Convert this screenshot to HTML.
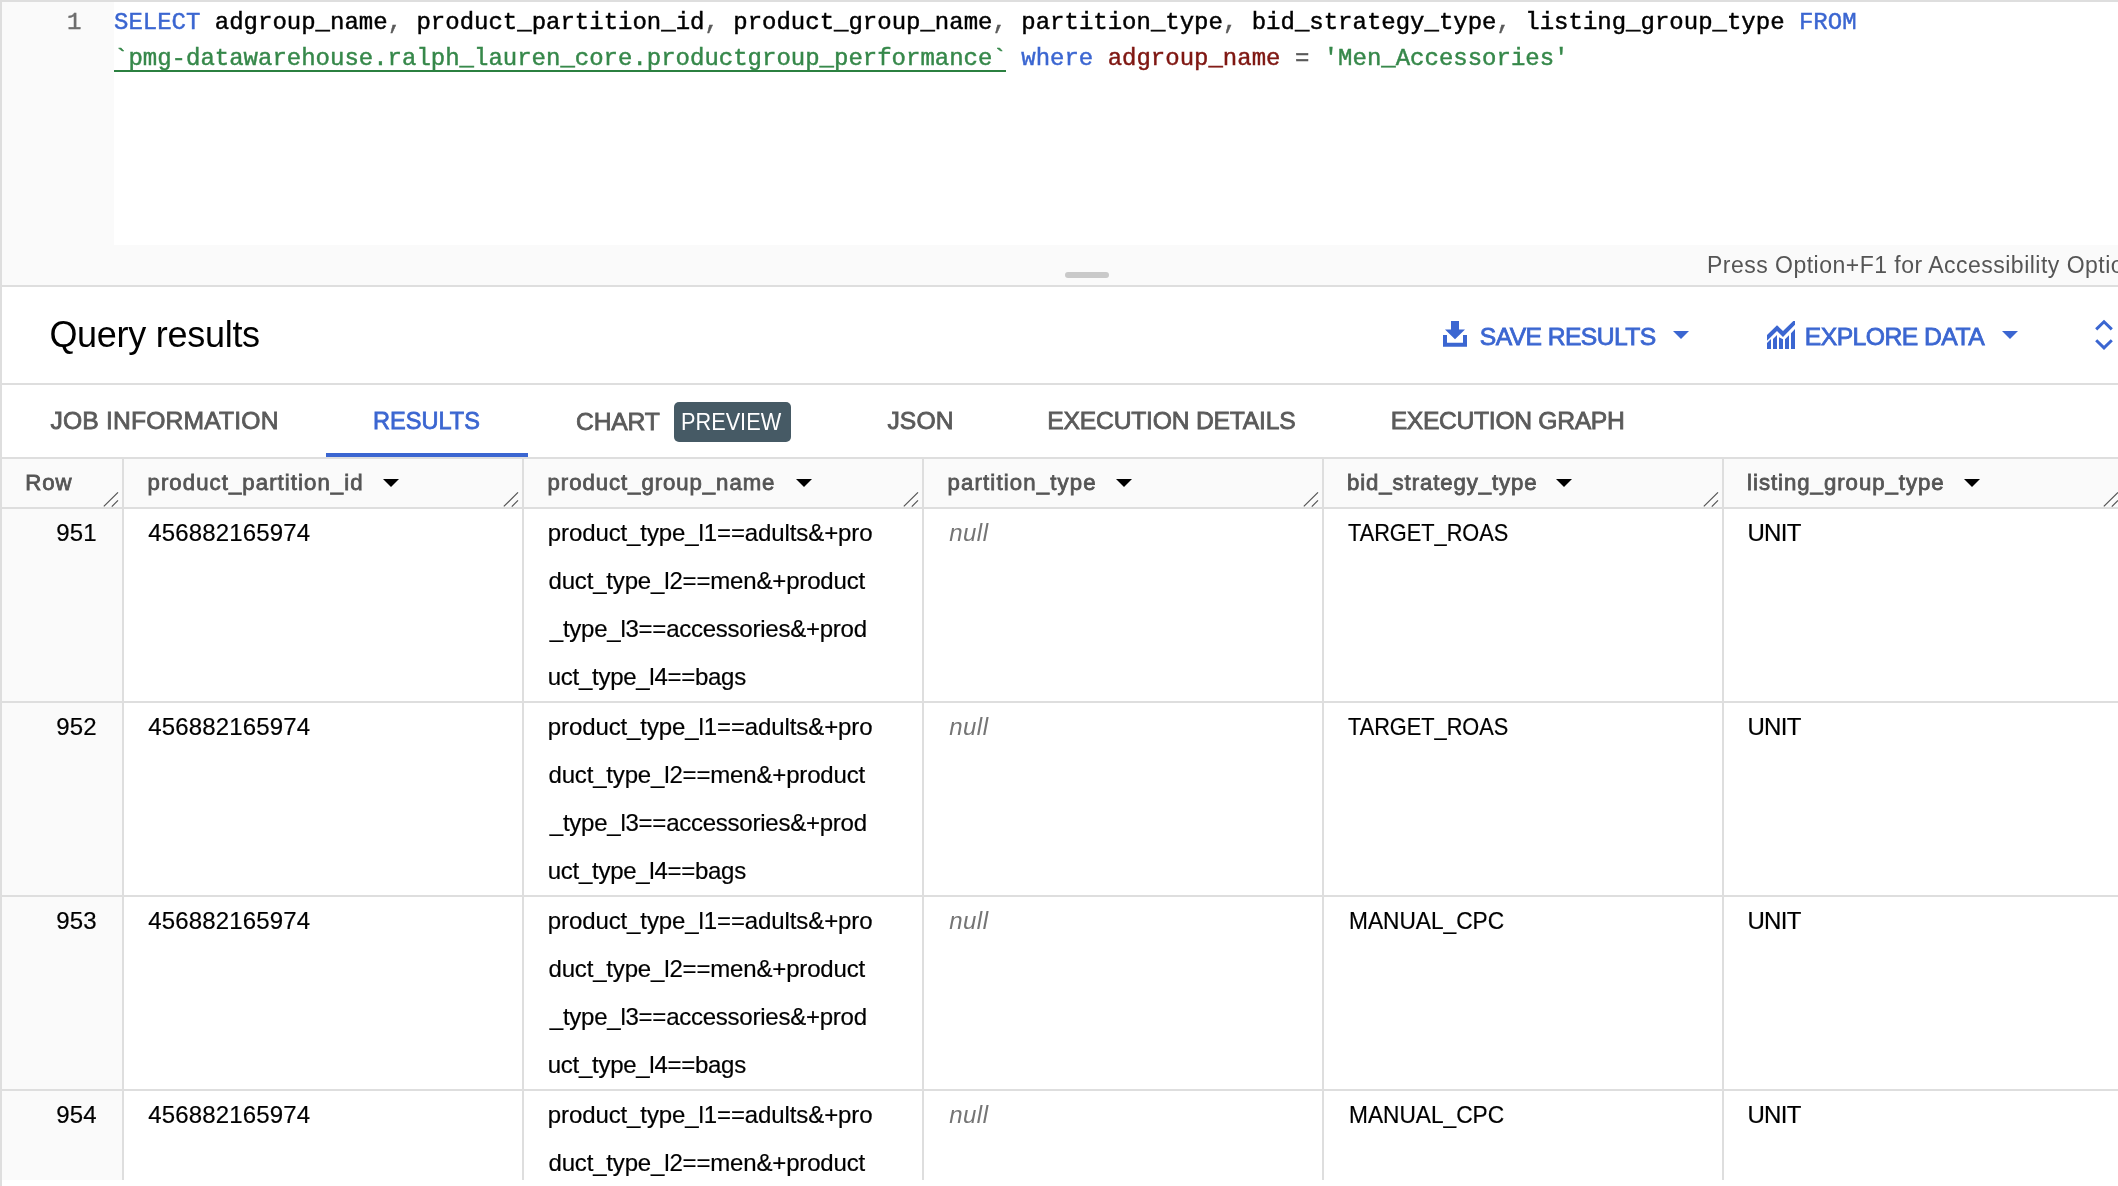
<!DOCTYPE html><html><head><meta charset="utf-8"><title>Query results</title><style>

html,body{margin:0;padding:0;background:#fff;}
body{width:2118px;height:1186px;position:relative;overflow:hidden;font-family:"Liberation Sans", sans-serif;}
.t{position:absolute;white-space:pre;line-height:1;font-family:"Liberation Sans", sans-serif;}
.a{position:absolute;}
.code{position:absolute;left:114px;white-space:pre;font-family:"Liberation Mono", monospace;font-size:24px;letter-spacing:-0.002px;line-height:36px;color:#000;-webkit-text-stroke:0.45px currentColor;}
.hl{position:absolute;left:0;width:2118px;height:2px;background:#dedede;}
.vl{position:absolute;width:2px;background:#dedede;}
svg{position:absolute;overflow:visible;}

</style></head><body>
<div class="a" style="left:0;top:0;width:2118px;height:285px;background:#fafafa"></div>
<div class="a" style="left:114px;top:2px;width:2004px;height:243px;background:#fff"></div>
<div class="hl" style="top:0"></div>
<div class="a" style="left:114px;top:70px;width:892px;height:2px;background:#2b8040"></div>
<div class="a" style="left:1065px;top:272px;width:44px;height:6px;border-radius:3px;background:#c9c9c9"></div>
<div class="hl" style="top:285px"></div>
<div class="hl" style="top:383px"></div>
<div class="a" style="left:326px;top:453px;width:202px;height:4px;background:#3b66d1"></div>
<div class="hl" style="top:457px"></div>
<div class="a" style="left:674px;top:402px;width:117px;height:40px;border-radius:5px;background:#465a65"></div>
<div class="a" style="left:2px;top:459px;width:2116px;height:48px;background:#fafafa"></div>
<div class="a" style="left:2px;top:509px;width:120px;height:671px;background:#fafafa"></div>
<div class="hl" style="top:507px"></div>
<div class="hl" style="top:701px"></div>
<div class="hl" style="top:895px"></div>
<div class="hl" style="top:1089px"></div>
<div class="vl" style="left:122px;top:459px;height:721px"></div>
<div class="vl" style="left:522px;top:459px;height:721px"></div>
<div class="vl" style="left:922px;top:459px;height:721px"></div>
<div class="vl" style="left:1322px;top:459px;height:721px"></div>
<div class="vl" style="left:1722px;top:459px;height:721px"></div>
<div class="vl" style="left:0;top:0;height:1186px"></div>
<svg style="left:1443px;top:321px" width="24" height="26" viewBox="0 0 24 26"><path fill="#3b66d1" d="M8 0H16V8.4H22L12 18.2L2 8.4H8ZM0 14H4V21.8H20V14H24V25.8H0Z"/></svg>
<svg style="left:1673.2px;top:331px" width="16" height="8" viewBox="0 0 16 8"><path d="M0 0H16L8 8Z" fill="#3b66d1"/></svg>
<svg style="left:1767px;top:321px" width="28" height="28" viewBox="0 0 28 28"><g fill="#3b66d1"><path d="M0 14L10 4.2L16 10L26.3 0H28V3.8L16 16L10 10L0 19.8Z"/><path d="M0 22L4 18.1V28H0ZM6 18L10 14V28H6ZM12 16.2L16 18.2V28H12ZM18 18.2L22 14.2V28H18ZM24 12.2L28 8.1V28H24Z"/></g></svg>
<svg style="left:2002px;top:331px" width="16" height="8" viewBox="0 0 16 8"><path d="M0 0H16L8 8Z" fill="#3b66d1"/></svg>
<svg style="left:2090px;top:316px" width="28" height="38" viewBox="2090 316 28 38"><g fill="none" stroke="#3b66d1" stroke-width="3"><path d="M2096.2 329.4L2104 321.8L2111.8 329.4"/><path d="M2096.2 340.2L2104 347.8L2111.8 340.2"/></g></svg>
<svg style="left:383.2px;top:479.3px" width="16" height="8" viewBox="0 0 16 8"><path d="M0 0H16L8 8Z" fill="#000"/></svg>
<svg style="left:795.5px;top:479.3px" width="16" height="8" viewBox="0 0 16 8"><path d="M0 0H16L8 8Z" fill="#000"/></svg>
<svg style="left:1115.8px;top:479.3px" width="16" height="8" viewBox="0 0 16 8"><path d="M0 0H16L8 8Z" fill="#000"/></svg>
<svg style="left:1555.6px;top:479.3px" width="16" height="8" viewBox="0 0 16 8"><path d="M0 0H16L8 8Z" fill="#000"/></svg>
<svg style="left:1964.1px;top:479.3px" width="16" height="8" viewBox="0 0 16 8"><path d="M0 0H16L8 8Z" fill="#000"/></svg>
<svg style="left:103px;top:491px" width="16" height="16" viewBox="0 0 16 16"><path d="M0.8 15.4L15 1.4M8.8 15.6L15 9.4" stroke="#555" stroke-width="1.25" fill="none"/></svg>
<svg style="left:503px;top:491px" width="16" height="16" viewBox="0 0 16 16"><path d="M0.8 15.4L15 1.4M8.8 15.6L15 9.4" stroke="#555" stroke-width="1.25" fill="none"/></svg>
<svg style="left:903px;top:491px" width="16" height="16" viewBox="0 0 16 16"><path d="M0.8 15.4L15 1.4M8.8 15.6L15 9.4" stroke="#555" stroke-width="1.25" fill="none"/></svg>
<svg style="left:1303px;top:491px" width="16" height="16" viewBox="0 0 16 16"><path d="M0.8 15.4L15 1.4M8.8 15.6L15 9.4" stroke="#555" stroke-width="1.25" fill="none"/></svg>
<svg style="left:1703px;top:491px" width="16" height="16" viewBox="0 0 16 16"><path d="M0.8 15.4L15 1.4M8.8 15.6L15 9.4" stroke="#555" stroke-width="1.25" fill="none"/></svg>
<svg style="left:2103px;top:491px" width="16" height="16" viewBox="0 0 16 16"><path d="M0.8 15.4L15 1.4M8.8 15.6L15 9.4" stroke="#555" stroke-width="1.25" fill="none"/></svg>
<div id="tx" style="position:absolute;left:0;top:0;width:2118px;height:1186px;will-change:transform">
<div class="code" id="ln" style="left:67px;top:5px;color:#6e6e6e">1</div>
<div class="code" id="c1" style="top:5px"><span style="color:#3b66d1">SELECT</span> adgroup_name<span style="color:#5a5a5a">,</span> product_partition_id<span style="color:#5a5a5a">,</span> product_group_name<span style="color:#5a5a5a">,</span> partition_type<span style="color:#5a5a5a">,</span> bid_strategy_type<span style="color:#5a5a5a">,</span> listing_group_type <span style="color:#3b66d1">FROM</span></div>
<div class="code" id="c2" style="top:41px"><span style="color:#36884a">`pmg-datawarehouse.ralph_lauren_core.productgroup_performance`</span> <span style="color:#3b66d1">where</span> <span style="color:#7f1712">adgroup_name</span> <span style="color:#5a5a5a">=</span> <span style="color:#36884a">'Men_Accessories'</span></div>
<span class="t" id="t0" style="left:49.40px;top:317.00px;font-size:36px;color:#000;letter-spacing:-0.278px;">Query results</span>
<span class="t" id="t1" style="left:1479.87px;top:325.00px;font-size:24.7px;color:#3b66d1;-webkit-text-stroke:0.8px currentColor;letter-spacing:-0.606px;">SAVE RESULTS</span>
<span class="t" id="t2" style="left:1804.80px;top:325.00px;font-size:24.7px;color:#3b66d1;-webkit-text-stroke:0.8px currentColor;letter-spacing:-0.530px;">EXPLORE DATA</span>
<span class="t" id="t3" style="left:50.40px;top:409.00px;font-size:24.7px;color:#5a5a5a;-webkit-text-stroke:0.8px currentColor;letter-spacing:0.167px;">JOB INFORMATION</span>
<span class="t" id="t4" style="left:373.00px;top:409.00px;font-size:24.7px;color:#3b66d1;-webkit-text-stroke:0.8px currentColor;transform:scaleX(0.9544);transform-origin:0 0;">RESULTS</span>
<span class="t" id="t5" style="left:575.97px;top:410.00px;font-size:24.7px;color:#5a5a5a;-webkit-text-stroke:0.8px currentColor;letter-spacing:-0.167px;">CHART</span>
<span class="t" id="t6" style="left:681.43px;top:410.00px;font-size:24px;color:#fff;transform:scaleX(0.9046);transform-origin:0 0;">PREVIEW</span>
<span class="t" id="t7" style="left:887.40px;top:409.00px;font-size:24.7px;color:#5a5a5a;-webkit-text-stroke:0.8px currentColor;letter-spacing:0.111px;">JSON</span>
<span class="t" id="t8" style="left:1047.33px;top:409.00px;font-size:24.7px;color:#5a5a5a;-webkit-text-stroke:0.8px currentColor;letter-spacing:-0.229px;">EXECUTION DETAILS</span>
<span class="t" id="t9" style="left:1390.73px;top:409.00px;font-size:24.7px;color:#5a5a5a;-webkit-text-stroke:0.8px currentColor;letter-spacing:-0.333px;">EXECUTION GRAPH</span>
<span class="t" id="t10" style="left:1707.00px;top:254.00px;font-size:23px;color:#555;letter-spacing:0.483px;">Press Option+F1 for Accessibility Options</span>
<span class="t" id="t11" style="left:25.30px;top:472.00px;font-size:22.2px;color:#555;-webkit-text-stroke:0.8px currentColor;letter-spacing:0.917px;">Row</span>
<span class="t" id="t12" style="left:147.53px;top:472.00px;font-size:22.2px;color:#555;-webkit-text-stroke:0.8px currentColor;letter-spacing:1.061px;">product_partition_id</span>
<span class="t" id="t13" style="left:547.53px;top:472.00px;font-size:22.2px;color:#555;-webkit-text-stroke:0.8px currentColor;letter-spacing:0.941px;">product_group_name</span>
<span class="t" id="t14" style="left:947.60px;top:472.00px;font-size:22.2px;color:#555;-webkit-text-stroke:0.8px currentColor;letter-spacing:1.128px;">partition_type</span>
<span class="t" id="t15" style="left:1347.07px;top:472.00px;font-size:22.2px;color:#555;-webkit-text-stroke:0.8px currentColor;letter-spacing:0.896px;">bid_strategy_type</span>
<span class="t" id="t16" style="left:1747.10px;top:472.00px;font-size:22.2px;color:#555;-webkit-text-stroke:0.8px currentColor;letter-spacing:0.971px;">listing_group_type</span>
<span class="t" id="t17" style="left:56.25px;top:521.00px;font-size:24px;color:#000;-webkit-text-stroke:0.2px currentColor;letter-spacing:0.130px;">951</span>
<span class="t" id="t18" style="left:148.17px;top:521.00px;font-size:24px;color:#000;-webkit-text-stroke:0.2px currentColor;letter-spacing:0.167px;">456882165974</span>
<span class="t" id="t19" style="left:547.80px;top:521.00px;font-size:24px;color:#000;-webkit-text-stroke:0.2px currentColor;letter-spacing:-0.105px;">product_type_l1==adults&amp;+pro</span>
<span class="t" id="t20" style="left:548.47px;top:569.00px;font-size:24px;color:#000;-webkit-text-stroke:0.2px currentColor;letter-spacing:-0.167px;">duct_type_l2==men&amp;+product</span>
<span class="t" id="t21" style="left:549.80px;top:617.00px;font-size:24px;color:#000;-webkit-text-stroke:0.2px currentColor;letter-spacing:-0.244px;">_type_l3==accessories&amp;+prod</span>
<span class="t" id="t22" style="left:547.80px;top:665.00px;font-size:24px;color:#000;-webkit-text-stroke:0.2px currentColor;letter-spacing:-0.281px;">uct_type_l4==bags</span>
<span class="t" id="t23" style="left:949.17px;top:521.00px;font-size:24px;color:#757575;font-style:italic;letter-spacing:0.500px;">null</span>
<span class="t" id="t24" style="left:1348.13px;top:521.00px;font-size:24px;color:#000;-webkit-text-stroke:0.2px currentColor;transform:scaleX(0.9059);transform-origin:0 0;">TARGET_ROAS</span>
<span class="t" id="t25" style="left:1747.43px;top:521.00px;font-size:24px;color:#000;-webkit-text-stroke:0.2px currentColor;letter-spacing:-0.667px;">UNIT</span>
<span class="t" id="t26" style="left:56.25px;top:715.00px;font-size:24px;color:#000;-webkit-text-stroke:0.2px currentColor;letter-spacing:0.130px;">952</span>
<span class="t" id="t27" style="left:148.17px;top:715.00px;font-size:24px;color:#000;-webkit-text-stroke:0.2px currentColor;letter-spacing:0.167px;">456882165974</span>
<span class="t" id="t28" style="left:547.80px;top:715.00px;font-size:24px;color:#000;-webkit-text-stroke:0.2px currentColor;letter-spacing:-0.105px;">product_type_l1==adults&amp;+pro</span>
<span class="t" id="t29" style="left:548.47px;top:763.00px;font-size:24px;color:#000;-webkit-text-stroke:0.2px currentColor;letter-spacing:-0.167px;">duct_type_l2==men&amp;+product</span>
<span class="t" id="t30" style="left:549.80px;top:811.00px;font-size:24px;color:#000;-webkit-text-stroke:0.2px currentColor;letter-spacing:-0.244px;">_type_l3==accessories&amp;+prod</span>
<span class="t" id="t31" style="left:547.80px;top:859.00px;font-size:24px;color:#000;-webkit-text-stroke:0.2px currentColor;letter-spacing:-0.281px;">uct_type_l4==bags</span>
<span class="t" id="t32" style="left:949.17px;top:715.00px;font-size:24px;color:#757575;font-style:italic;letter-spacing:0.500px;">null</span>
<span class="t" id="t33" style="left:1348.13px;top:715.00px;font-size:24px;color:#000;-webkit-text-stroke:0.2px currentColor;transform:scaleX(0.9059);transform-origin:0 0;">TARGET_ROAS</span>
<span class="t" id="t34" style="left:1747.43px;top:715.00px;font-size:24px;color:#000;-webkit-text-stroke:0.2px currentColor;letter-spacing:-0.667px;">UNIT</span>
<span class="t" id="t35" style="left:56.25px;top:909.00px;font-size:24px;color:#000;-webkit-text-stroke:0.2px currentColor;letter-spacing:0.130px;">953</span>
<span class="t" id="t36" style="left:148.17px;top:909.00px;font-size:24px;color:#000;-webkit-text-stroke:0.2px currentColor;letter-spacing:0.167px;">456882165974</span>
<span class="t" id="t37" style="left:547.80px;top:909.00px;font-size:24px;color:#000;-webkit-text-stroke:0.2px currentColor;letter-spacing:-0.105px;">product_type_l1==adults&amp;+pro</span>
<span class="t" id="t38" style="left:548.47px;top:957.00px;font-size:24px;color:#000;-webkit-text-stroke:0.2px currentColor;letter-spacing:-0.167px;">duct_type_l2==men&amp;+product</span>
<span class="t" id="t39" style="left:549.80px;top:1005.00px;font-size:24px;color:#000;-webkit-text-stroke:0.2px currentColor;letter-spacing:-0.244px;">_type_l3==accessories&amp;+prod</span>
<span class="t" id="t40" style="left:547.80px;top:1053.00px;font-size:24px;color:#000;-webkit-text-stroke:0.2px currentColor;letter-spacing:-0.281px;">uct_type_l4==bags</span>
<span class="t" id="t41" style="left:949.17px;top:909.00px;font-size:24px;color:#757575;font-style:italic;letter-spacing:0.500px;">null</span>
<span class="t" id="t42" style="left:1348.60px;top:909.00px;font-size:24px;color:#000;-webkit-text-stroke:0.2px currentColor;transform:scaleX(0.9453);transform-origin:0 0;">MANUAL_CPC</span>
<span class="t" id="t43" style="left:1747.43px;top:909.00px;font-size:24px;color:#000;-webkit-text-stroke:0.2px currentColor;letter-spacing:-0.667px;">UNIT</span>
<span class="t" id="t44" style="left:56.25px;top:1103.00px;font-size:24px;color:#000;-webkit-text-stroke:0.2px currentColor;letter-spacing:0.130px;">954</span>
<span class="t" id="t45" style="left:148.17px;top:1103.00px;font-size:24px;color:#000;-webkit-text-stroke:0.2px currentColor;letter-spacing:0.167px;">456882165974</span>
<span class="t" id="t46" style="left:547.80px;top:1103.00px;font-size:24px;color:#000;-webkit-text-stroke:0.2px currentColor;letter-spacing:-0.105px;">product_type_l1==adults&amp;+pro</span>
<span class="t" id="t47" style="left:548.47px;top:1151.00px;font-size:24px;color:#000;-webkit-text-stroke:0.2px currentColor;letter-spacing:-0.167px;">duct_type_l2==men&amp;+product</span>
<span class="t" id="t48" style="left:949.17px;top:1103.00px;font-size:24px;color:#757575;font-style:italic;letter-spacing:0.500px;">null</span>
<span class="t" id="t49" style="left:1348.60px;top:1103.00px;font-size:24px;color:#000;-webkit-text-stroke:0.2px currentColor;transform:scaleX(0.9453);transform-origin:0 0;">MANUAL_CPC</span>
<span class="t" id="t50" style="left:1747.43px;top:1103.00px;font-size:24px;color:#000;-webkit-text-stroke:0.2px currentColor;letter-spacing:-0.667px;">UNIT</span>
</div>
</body></html>
